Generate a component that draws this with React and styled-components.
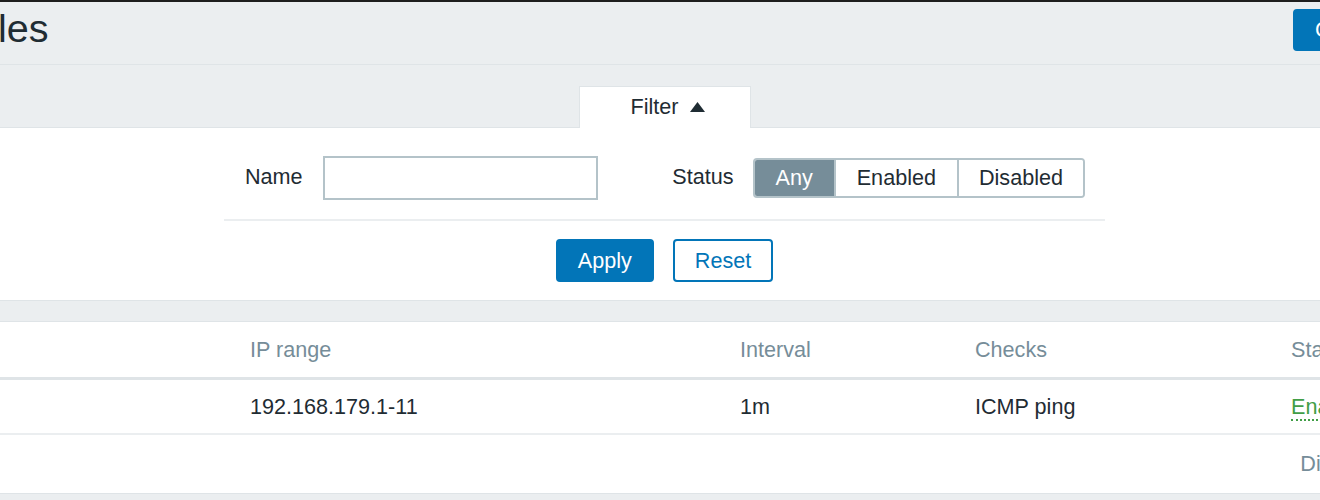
import React from 'react';
import styled, { createGlobalStyle } from 'styled-components';

const GlobalStyle = createGlobalStyle`
  html, body { margin: 0; padding: 0; background: #ebeef0; overflow: hidden; }
  body {
    font-family: "Liberation Sans", Arial, sans-serif;
    font-size: 21.6px;
    color: #1f2c33;
  }
  *, *::before, *::after { box-sizing: border-box; }
`;

const Viewport = styled.div`
  width: 1320px;
  height: 500px;
  overflow: hidden;
  border-top: 2px solid #1e1e1e;
  background: #ebeef0;
`;

/* The page is wider than the window and scrolled sideways. */
const Page = styled.div`
  width: 1803px;
  margin-left: -237px;
`;

const Header = styled.header`
  height: 63px;
  display: flex;
  align-items: flex-end;
  justify-content: space-between;
  padding: 0 25px 13px 15px;
  border-bottom: 1px solid #dfe4e7;
`;

const Title = styled.h1`
  margin: 0;
  font-size: 39.6px;
  font-weight: normal;
  line-height: 46px;
  color: #1f2c33;
  white-space: nowrap;
`;

const Button = styled.button`
  height: ${p => p.$h || 43}px;
  padding: 0 20px;
  font-family: inherit;
  font-size: 21.6px;
  border-radius: 4px;
  border: 2px solid #0275b8;
  background: ${p => (p.$alt ? '#ffffff' : '#0275b8')};
  color: ${p => (p.$alt ? '#0275b8' : '#ffffff')};
  white-space: nowrap;
  cursor: pointer;
  flex-shrink: 0;
`;

const FilterStrip = styled.div`
  height: 63px;
  display: flex;
  justify-content: center;
  align-items: flex-end;
  border-bottom: 1px solid #dfe4e7;
`;

const FilterTab = styled.div`
  height: 42px;
  margin-bottom: -1px;
  display: flex;
  align-items: center;
  gap: 11px;
  padding: 0 45px 2px 51px;
  background: #ffffff;
  border: 1px solid #dfe4e7;
  border-bottom: none;
  color: #1f2c33;
`;

const FilterBody = styled.div`
  background: #ffffff;
  border-bottom: 1px solid #dfe4e7;
  padding: 28px 0 18px;
`;

const FilterForm = styled.div`
  width: 881px;
  margin: 0 auto;
`;

const Fields = styled.div`
  display: flex;
  justify-content: space-between;
  align-items: center;
  padding: 0 20px 19px 21px;
  border-bottom: 2px solid #ebeef0;
`;

const Field = styled.div`
  display: flex;
  align-items: center;
  gap: ${p => p.$gap || 20}px;
`;

const Label = styled.label`
  color: #1f2c33;
  margin-top: -3px;
`;

const TextInput = styled.input`
  width: 275px;
  height: 44px;
  border: 2px solid #b4c3c9;
  background: #ffffff;
  font-family: inherit;
  font-size: 21.6px;
  padding: 0 8px;
  outline: none;
`;

const Segmented = styled.div`
  display: flex;
  height: 40px;
  border: 2px solid #b4c3c9;
  border-radius: 4px;
  overflow: hidden;
`;

const Segment = styled.button`
  height: 100%;
  padding: 0 ${p => p.$pad || 21}px;
  border: none;
  border-left: ${p => (p.$first ? 'none' : '2px solid #b4c3c9')};
  background: ${p => (p.$active ? '#768d99' : '#ffffff')};
  color: ${p => (p.$active ? '#ffffff' : '#1f2c33')};
  font-family: inherit;
  font-size: 21.6px;
  cursor: pointer;
`;

const Actions = styled.div`
  display: flex;
  justify-content: center;
  gap: 19px;
  margin-top: 18px;
`;

const TableWrap = styled.div`
  margin-top: 20px;
  background: #ffffff;
  border-top: 1px solid #dfe4e7;
`;

const Table = styled.table`
  width: 100%;
  table-layout: fixed;
  border-collapse: separate;
  border-spacing: 0;
`;

const Th = styled.th`
  height: 58px;
  padding: 0 9px;
  text-align: left;
  font-weight: normal;
  color: #768d99;
  border-bottom: 3px solid #dfe4e7;
  white-space: nowrap;
`;

const Td = styled.td`
  height: 55px;
  padding: 0 9px;
  border-bottom: 2px solid #ebeef0;
  color: #1f2c33;
  white-space: nowrap;
`;

const NameLink = styled.a`
  color: #0275b8;
  text-decoration: none;
`;

const StatusLink = styled.a`
  color: #429e47;
  text-decoration: none;
  border-bottom: 2px dotted #429e47;
`;

const Paging = styled.div`
  height: 59px;
  display: flex;
  justify-content: flex-end;
  align-items: center;
  padding-right: 46px;
  background: #ffffff;
  border-bottom: 1px solid #dfe4e7;
  color: #768d99;
`;

const ArrowUp = () => (
  <svg width="15" height="10" viewBox="0 0 15 10" aria-hidden="true">
    <polygon points="7.5,0 15,10 0,10" fill="#1f2c33" />
  </svg>
);

const columns = [
  { label: 'Name ▲', width: 478 },
  { label: 'IP range', width: 490 },
  { label: 'Interval', width: 235 },
  { label: 'Checks', width: 316 },
  { label: 'Status', width: 284 },
];

export default function App() {
  return (
    <>
      <GlobalStyle />
      <Viewport>
        <Page>
          <Header>
            <Title>Discovery rules</Title>
            <Button $h={42}>Create discovery rule</Button>
          </Header>

          <FilterStrip>
            <FilterTab>
              <span>Filter</span>
              <ArrowUp />
            </FilterTab>
          </FilterStrip>

          <FilterBody>
            <FilterForm>
              <Fields>
                <Field>
                  <Label>Name</Label>
                  <TextInput type="text" />
                </Field>
                <Field $gap={19}>
                  <Label>Status</Label>
                  <Segmented>
                    <Segment $first $active $pad={21}>Any</Segment>
                    <Segment $pad={21}>Enabled</Segment>
                    <Segment $pad={20}>Disabled</Segment>
                  </Segmented>
                </Field>
              </Fields>
              <Actions>
                <Button>Apply</Button>
                <Button $alt>Reset</Button>
              </Actions>
            </FilterForm>
          </FilterBody>

          <TableWrap>
            <Table>
              <colgroup>
                {columns.map(c => (
                  <col key={c.label} style={{ width: c.width }} />
                ))}
              </colgroup>
              <thead>
                <tr>
                  {columns.map(c => (
                    <Th key={c.label}>{c.label}</Th>
                  ))}
                </tr>
              </thead>
              <tbody>
                <tr>
                  <Td><NameLink href="#">Local network</NameLink></Td>
                  <Td>192.168.179.1-11</Td>
                  <Td>1m</Td>
                  <Td>ICMP ping</Td>
                  <Td><StatusLink href="#">Enabled</StatusLink></Td>
                </tr>
              </tbody>
            </Table>
            <Paging>Displaying 1 of 1 found</Paging>
          </TableWrap>
        </Page>
      </Viewport>
    </>
  );
}
